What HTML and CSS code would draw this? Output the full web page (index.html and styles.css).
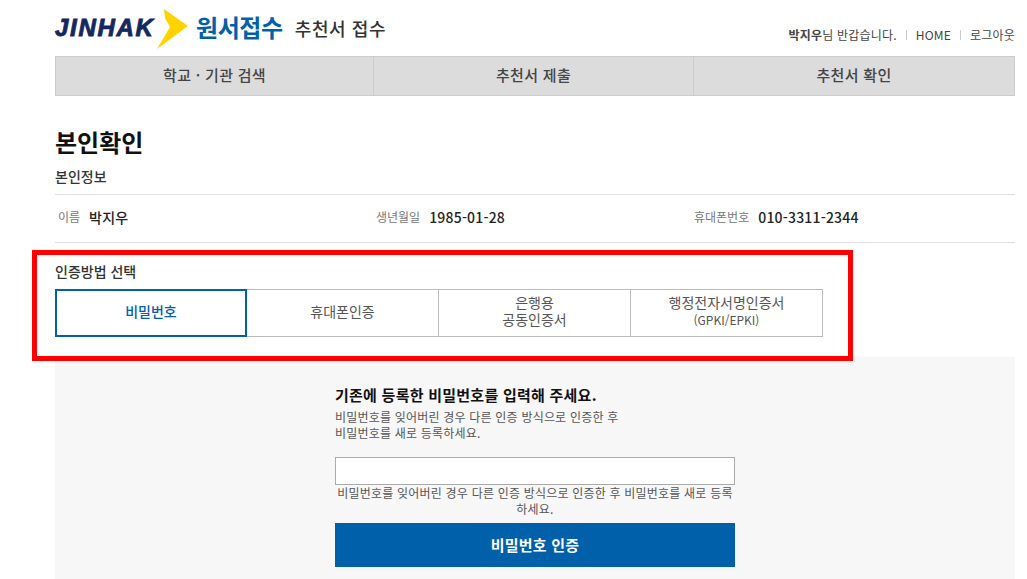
FILE: index.html
```html
<!DOCTYPE html>
<html lang="ko">
<head>
<meta charset="utf-8">
<title>추천서 접수</title>
<link rel="stylesheet" href="styles.css">
</head>
<body>
<div class="page">
  <header class="top">
    <div class="brand">
      <span class="logo-word">JINHAK</span>
      <svg class="logo-arrow" width="34" height="41" viewBox="0 0 34 41"><path d="M9 0 L33 17 L2 40 L15 18 L10 9 Z" fill="#ffd200"/></svg>
      <span class="logo-title">원서접수</span>
      <span class="page-name">추천서 접수</span>
    </div>
    <div class="util"><b>박지우</b>님 반갑습니다.<i class="sep"></i><a>HOME</a><i class="sep"></i><a>로그아웃</a></div>
  </header>
  <nav class="gnb">
    <a class="gnb-item">학교 · 기관 검색</a>
    <a class="gnb-item">추천서 제출</a>
    <a class="gnb-item">추천서 확인</a>
  </nav>
  <h1 class="title">본인확인</h1>
  <h2 class="sub">본인정보</h2>
  <div class="info">
    <div class="info-cell c1"><span class="lbl">이름</span><strong>박지우</strong></div>
    <div class="info-cell c2"><span class="lbl">생년월일</span><strong>1985-01-28</strong></div>
    <div class="info-cell c3"><span class="lbl">휴대폰번호</span><strong>010-3311-2344</strong></div>
  </div>
  <h2 class="sub method">인증방법 선택</h2>
  <div class="tabs">
    <a class="tab on"><span>비밀번호</span></a>
    <a class="tab"><span>휴대폰인증</span></a>
    <a class="tab"><span>은행용<br>공동인증서</span></a>
    <a class="tab"><span>행정전자서명인증서<br><small>(GPKI/EPKI)</small></span></a>
  </div>
  <section class="panel">
    <div class="form">
      <p class="lead">기존에 등록한 비밀번호를 입력해 주세요.</p>
      <p class="desc">비밀번호를 잊어버린 경우 다른 인증 방식으로 인증한 후<br>비밀번호를 새로 등록하세요.</p>
      <input class="pw" type="password">
      <p class="hint">비밀번호를 잊어버린 경우 다른 인증 방식으로 인증한 후 비밀번호를 새로 등록하세요.</p>
      <button class="submit" type="button">비밀번호 인증</button>
    </div>
  </section>
  <div class="highlight"></div>
</div>
</body>
</html>
```
FILE: styles.css
```css
* { box-sizing: border-box; }
html, body { margin: 0; padding: 0; height: 579px; overflow: hidden; background: #fff; }
body { font-family: "Noto Sans CJK KR", "Noto Sans", sans-serif; color: #333; font-size: 12px; }
.page { position: relative; width: 960px; margin-left: 55px; }
.top { height: 56px; display: flex; justify-content: space-between; }
.brand { display: flex; align-items: flex-start; }
.logo-word { font-family: "Liberation Sans", sans-serif; font-weight: 700; font-style: italic; font-size: 24px; line-height: 28px; color: #14285f; margin-top: 14px; width: 100px; letter-spacing: 1.7px; -webkit-text-stroke: 0.9px #14285f; white-space: nowrap; }
.logo-arrow { margin-top: 9px; flex: none; }
.logo-title { font-size: 24px; font-weight: 700; line-height: 32px; color: #0060a9; margin-top: 11px; margin-left: 7px; letter-spacing: -0.4px; }
.page-name { font-size: 18px; font-weight: 500; line-height: 26px; color: #333; margin-top: 15px; margin-left: 12px; letter-spacing: 0.6px; }
.util { margin-top: 26px; font-size: 12px; line-height: 18px; color: #444; display: flex; align-items: center; height: 18px; letter-spacing: 0.2px; }
.util b { font-weight: 700; }
.sep { width: 1px; height: 10px; background: #ccc; margin: 0 9px; }
.gnb { display: grid; grid-template-columns: 317px 320px 321px; height: 40px; background: #dcdcdc; border: 1px solid #ccc; }
.gnb-item { display: flex; align-items: center; justify-content: center; font-size: 15px; font-weight: 500; color: #444; letter-spacing: 0.3px; border-left: 1px solid #ccc; padding-bottom: 4px; }
.gnb-item:first-child { border-left: 0; }
.title { margin: 28px 0 0; font-size: 24px; font-weight: 700; line-height: 36px; color: #111; }
.sub { margin: 0; font-size: 14px; font-weight: 500; line-height: 20px; color: #333; }
.title + .sub { margin-top: 6px; }
.info { display: flex; align-items: center; height: 49px; margin-top: 8px; padding-bottom: 4px; border-top: 1px solid #ddd; border-bottom: 1px solid #ddd; }
.info-cell { display: flex; align-items: center; }
.c1 { width: 321px; padding-left: 3px; }
.c2 { width: 318px; }
.lbl { font-size: 12px; color: #777; margin-right: 9px; }
.info-cell strong { font-size: 14px; font-weight: 500; color: #222; letter-spacing: 0.2px; }
.method { margin-top: 18px; }
.tabs { display: grid; grid-template-columns: 192px 192px 192px 192px; width: 768px; height: 48px; margin-top: 8px; }
.tab { display: flex; align-items: center; justify-content: center; text-align: center; font-size: 14px; line-height: 17px; color: #555; border: 1px solid #bbb; border-left: 0; padding-bottom: 4px; }
.tab small { font-size: 12px; }
.tab.on { border: 2px solid #0060a9; color: #0060a9; font-weight: 500; }
.panel { margin-top: 20px; height: 240px; background: #f7f7f7; padding: 27px 0 0 280px; }
.form { width: 400px; }
.lead { margin: 0; font-size: 15px; font-weight: 700; line-height: 22px; color: #111; letter-spacing: 0.25px; }
.desc { margin: 3px 0 0; font-size: 12px; line-height: 16px; color: #555; letter-spacing: 0.2px; }
.pw { display: block; width: 400px; height: 28px; margin: 16px 0 0; background: #fff; border: 1px solid #aaa; padding: 0; }
.hint { margin: 0; font-size: 12px; line-height: 16px; color: #555; text-align: center; letter-spacing: 0.2px; }
.submit { display: block; width: 400px; height: 44px; margin-top: 6px; padding-bottom: 2px; border: 0; background: #0060a9; color: #fff; font-family: inherit; font-size: 15px; font-weight: 700; letter-spacing: 0.2px; }
.highlight { position: absolute; left: -23px; top: 250px; width: 821px; height: 111px; border: 5px solid #f00; pointer-events: none; }
```
